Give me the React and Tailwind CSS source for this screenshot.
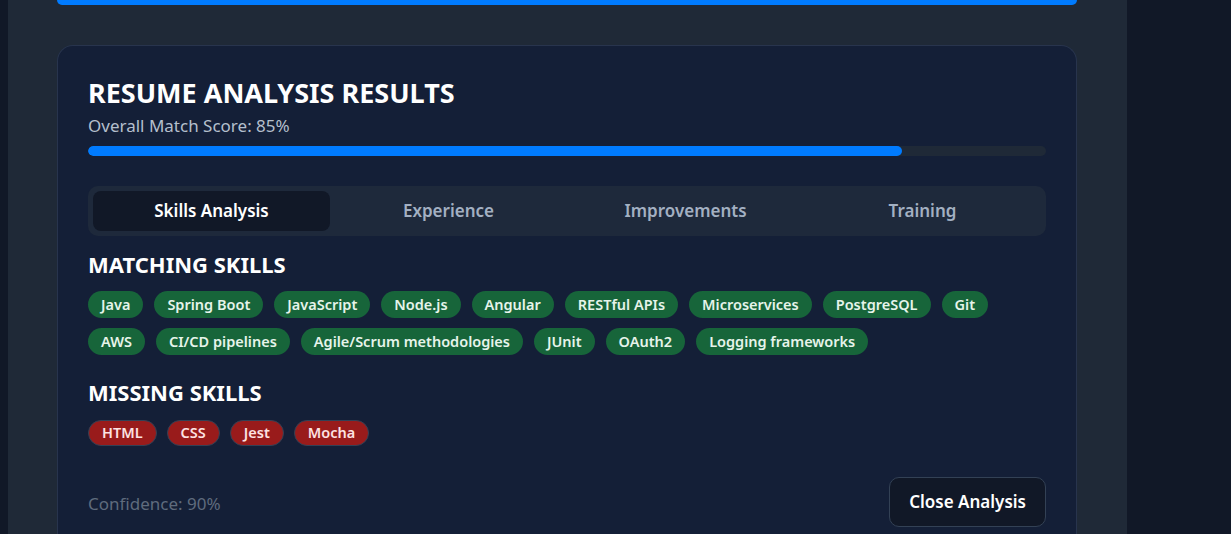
import React from "react";

const matching = ["Java","Spring Boot","JavaScript","Node.js","Angular","RESTful APIs","Microservices","PostgreSQL","Git","AWS","CI/CD pipelines","Agile/Scrum methodologies","JUnit","OAuth2","Logging frameworks"];
const missing = ["HTML","CSS","Jest","Mocha"];
const tabs = ["Skills Analysis","Experience","Improvements","Training"];

export default function App() {
  return (
    <div className="w-[1231px] h-[534px] overflow-hidden bg-[#111827] flex" style={{fontFamily: '"Noto Sans", "Open Sans", sans-serif'}}>
      <div className="ml-[8px] w-[1119px] bg-[#1f2937] px-[49px] flex flex-col">
        <div className="shrink-0 h-[5px] w-[1020px] rounded-b-[8px] bg-[#007bff]" />
        <div className="shrink-0 mt-[40px] w-[1020px] rounded-t-[16px] border border-b-0 border-[#28344d] bg-[#141f37] px-[30px] pt-[29px] pb-[20px]">
          <h2 className="text-[27px] leading-[36px] font-bold text-white">RESUME ANALYSIS RESULTS</h2>
          <p className="mt-[3px] text-[17px] leading-[24px] text-[#b4bfcd]">Overall Match Score: 85%</p>
          <div className="mt-[8px] h-[10px] rounded-full bg-[#1f2937] overflow-hidden">
            <div className="h-full rounded-full bg-[#007bff]" style={{width: "85%"}} />
          </div>
          <div className="mt-[30px] h-[50px] rounded-[10px] bg-[#1e293b] p-[5px] grid grid-cols-4">
            {tabs.map((t, i) => (
              <div key={t} className={`flex items-center justify-center rounded-[8px] text-[17px] font-semibold ${i === 0 ? "bg-[#111827] text-white" : "text-[#a3b0c2]"}`}>{t}</div>
            ))}
          </div>
          <h3 className="mt-[13px] text-[22px] leading-[30px] font-bold text-white">MATCHING SKILLS</h3>
          <div className="mt-[12px] flex flex-wrap gap-x-[11px] gap-y-[10px]">
            {matching.map(s => (
              <span key={s} className="h-[27px] px-[13px] flex items-center rounded-full bg-[#17653a] text-[14.5px] font-semibold text-[#e6f4ea]">{s}</span>
            ))}
          </div>
          <h3 className="mt-[22px] text-[22px] leading-[30px] font-bold text-white">MISSING SKILLS</h3>
          <div className="mt-[13px] flex flex-wrap gap-x-[10px] gap-y-[10px]">
            {missing.map(s => (
              <span key={s} className="h-[26px] px-[13px] flex items-center rounded-full border border-[#334155] bg-[#991b1b] text-[14.5px] font-semibold text-[#fde2e2]">{s}</span>
            ))}
          </div>
          <div className="mt-[31px] flex items-center justify-between">
            <span className="mt-[3px] text-[17px] text-[#5f6b7d]">Confidence: 90%</span>
            <button className="h-[50px] px-[19px] rounded-[10px] border border-[#334155] bg-[#111827] text-[17px] font-semibold text-white">Close Analysis</button>
          </div>
        </div>
      </div>
    </div>
  );
}
